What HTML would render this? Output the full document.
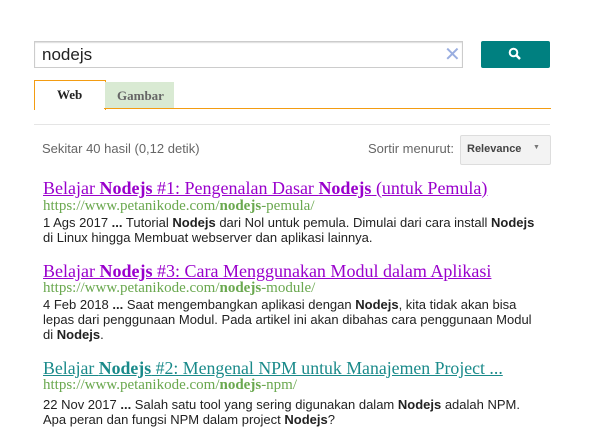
<!DOCTYPE html><html><head><style>
body{margin:0;width:602px;height:445px;background:#fff;position:relative;font-family:"Liberation Sans",sans-serif;overflow:hidden}
.a{position:absolute}
.t{font-family:"Liberation Serif",serif;font-size:18px;color:#9900cc;text-decoration:underline;white-space:nowrap}
.u{font-family:"Liberation Serif",serif;font-size:15px;color:#6aa84f;white-space:nowrap}
.s{font-size:13px;color:#222;line-height:15px;width:495px}
</style></head><body>
<div class="a" style="left:34px;top:41px;width:427px;height:25px;border:1px solid #ccc;box-shadow:inset 0 1px 1px #ddd"></div>
<div class="a" style="left:42px;top:45px;font-size:17px;color:#222">nodejs</div>
<div class="a" style="left:444px;top:42px;font-size:20px;color:#9aaee0">✕</div>
<div class="a" style="left:481px;top:41px;width:69px;height:27px;background:#008080;border-radius:2px"></div>
<svg class="a" style="left:508px;top:47px" width="14" height="14" viewBox="0 0 14 14"><circle cx="5.5" cy="5.5" r="3.8" fill="none" stroke="#fff" stroke-width="2"/><path d="M8.3 8.3L12 12" stroke="#fff" stroke-width="2.5"/></svg>
<div class="a" style="left:34px;top:80px;width:70px;height:29px;border:1px solid #f39c12;border-bottom:none;background:#fff"></div>
<div class="a" style="left:57px;top:87px;font-family:'Liberation Serif',serif;font-weight:bold;font-size:13px;color:#222">Web</div>
<div class="a" style="left:105px;top:82px;width:69px;height:27px;background:#d9ead3"></div>
<div class="a" style="left:117px;top:88px;font-family:'Liberation Serif',serif;font-weight:bold;font-size:13px;color:#666">Gambar</div>
<div class="a" style="left:104px;top:108px;width:447px;height:1px;background:#f39c12"></div>
<div class="a" style="left:34px;top:124px;width:516px;height:1px;background:#e5e5e5"></div>
<div class="a" style="left:42px;top:141px;font-size:13px;color:#666">Sekitar 40 hasil (0,12 detik)</div>
<div class="a" style="left:368px;top:141px;font-size:13px;color:#666">Sortir menurut:</div>
<div class="a" style="left:460px;top:135px;width:89px;height:28px;border:1px solid #ddd;background:#f3f3f3;border-radius:2px"></div>
<div class="a" style="left:467px;top:143px;font-size:11px;font-weight:bold;color:#444">Relevance</div>
<div class="a" style="left:533px;top:144px;font-size:7px;color:#777">▼</div>
<div class="a t" style="left:43px;top:178px">Belajar <b>Nodejs</b> #1: Pengenalan Dasar <b>Nodejs</b> (untuk Pemula)</div>
<div class="a u" style="left:43px;top:198px">https://www.petanikode.com/<b>nodejs</b>-pemula/</div>
<div class="a s" style="left:43px;top:215px">1 Ags 2017 <b>...</b> Tutorial <b>Nodejs</b> dari Nol untuk pemula. Dimulai dari cara install <b>Nodejs</b> di Linux hingga Membuat webserver dan aplikasi lainnya.</div>
<div class="a t" style="left:43px;top:261px">Belajar <b>Nodejs</b> #3: Cara Menggunakan Modul dalam Aplikasi</div>
<div class="a u" style="left:43px;top:280px">https://www.petanikode.com/<b>nodejs</b>-module/</div>
<div class="a s" style="left:43px;top:297px">4 Feb 2018 <b>...</b> Saat mengembangkan aplikasi dengan <b>Nodejs</b>, kita tidak akan bisa lepas dari penggunaan Modul. Pada artikel ini akan dibahas cara penggunaan Modul di <b>Nodejs</b>.</div>
<div class="a t" style="left:43px;top:358px;color:#1a8a8a;font-size:17.8px">Belajar <b>Nodejs</b> #2: Mengenal NPM untuk Manajemen Project ...</div>
<div class="a u" style="left:43px;top:377px">https://www.petanikode.com/<b>nodejs</b>-npm/</div>
<div class="a s" style="left:43px;top:397px">22 Nov 2017 <b>...</b> Salah satu tool yang sering digunakan dalam <b>Nodejs</b> adalah NPM. Apa peran dan fungsi NPM dalam project <b>Nodejs</b>?</div>
</body></html>
